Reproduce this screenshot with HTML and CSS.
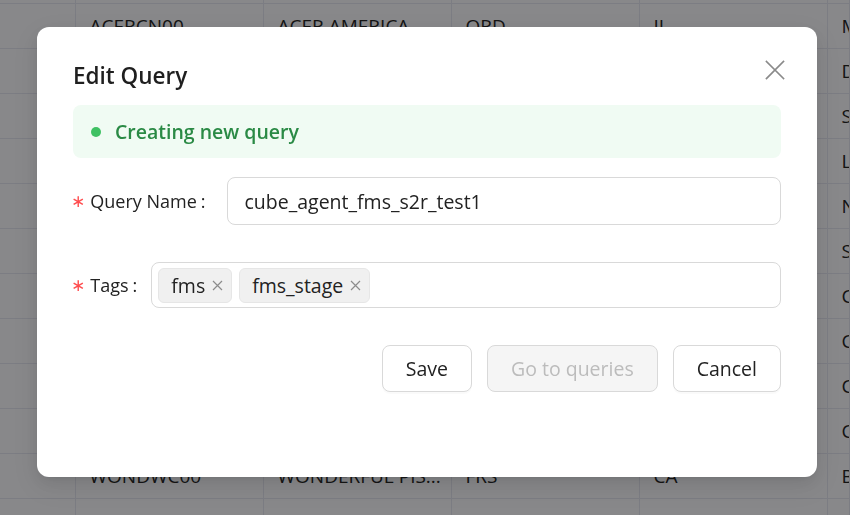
FILE: index.html
```html
<!doctype html>
<html lang="en">
  <head>
    <meta charset="UTF-8" />
    <meta name="viewport" content="width=device-width, initial-scale=1.0" />
    <title>Edit Query</title>
    <link rel="stylesheet" href="styles.css">
  </head>
  <body>
    <div class="page">
      <table class="grid">
        <tbody>
          <tr><td></td><td></td><td></td><td></td><td></td><td></td></tr>
          <tr><td></td><td>ACERCN00</td><td>ACER AMERICA</td><td>ORD</td><td>IL</td><td>MA</td></tr>
          <tr><td></td><td>ACERCN00</td><td>ACER AMERICA</td><td>ORD</td><td>IL</td><td>DE</td></tr>
          <tr><td></td><td>ACERCN00</td><td>ACER AMERICA</td><td>ORD</td><td>IL</td><td>SE</td></tr>
          <tr><td></td><td>ACERCN00</td><td>ACER AMERICA</td><td>ORD</td><td>IL</td><td>LA</td></tr>
          <tr><td></td><td>ACERCN00</td><td>ACER AMERICA</td><td>ORD</td><td>IL</td><td>NE</td></tr>
          <tr><td></td><td>ACERCN00</td><td>ACER AMERICA</td><td>ORD</td><td>IL</td><td>SE</td></tr>
          <tr><td></td><td>WONDWC00</td><td>WONDERFUL PIS...</td><td>FRS</td><td>CA</td><td>CH</td></tr>
          <tr><td></td><td>WONDWC00</td><td>WONDERFUL PIS...</td><td>FRS</td><td>CA</td><td>CH</td></tr>
          <tr><td></td><td>WONDWC00</td><td>WONDERFUL PIS...</td><td>FRS</td><td>CA</td><td>CH</td></tr>
          <tr><td></td><td>WONDWC00</td><td>WONDERFUL PIS...</td><td>FRS</td><td>CA</td><td>CH</td></tr>
          <tr><td></td><td>WONDWC00</td><td>WONDERFUL PIS...</td><td>FRS</td><td>CA</td><td>BO</td></tr>
          <tr><td></td><td>WONDWC00</td><td>WONDERFUL PIS</td><td>FRS</td><td>CA</td><td>CH</td></tr>
        </tbody>
      </table>
    </div>

    <div class="mask">
      <div class="modal" role="dialog" aria-labelledby="modal-title">
        <button class="close" type="button" aria-label="Close">
          <svg width="20" height="20" viewBox="0 0 20 20" fill="none" stroke="#8a8a8a" stroke-width="1.7" stroke-linecap="square">
            <path d="M1.5 1.5l17 17M18.5 1.5l-17 17" />
          </svg>
        </button>

        <h2 id="modal-title" class="title">Edit Query</h2>

        <div class="alert">
          <span class="dot"></span>
          <span>Creating new query</span>
        </div>

        <div class="form-item">
          <label class="label" for="query-name"><span class="req">∗</span>Query Name<span class="colon">:</span></label>
          <input id="query-name" class="input" type="text" value="cube_agent_fms_s2r_test1" />
        </div>

        <div class="form-item tight">
          <label class="label"><span class="req">∗</span>Tags<span class="colon">:</span></label>
          <div class="select">
            <span class="tag">fms<svg class="tag-x" width="11" height="11" viewBox="0 0 11 11" fill="none" stroke="#8c8c8c" stroke-width="1.2"><path d="M1 1l9 9M10 1l-9 9" /></svg></span>
            <span class="tag">fms_stage<svg class="tag-x" width="11" height="11" viewBox="0 0 11 11" fill="none" stroke="#8c8c8c" stroke-width="1.2"><path d="M1 1l9 9M10 1l-9 9" /></svg></span>
          </div>
        </div>

        <div class="footer">
          <button class="btn" type="button">Save</button>
          <button class="btn" type="button" disabled>Go to queries</button>
          <button class="btn" type="button">Cancel</button>
        </div>
      </div>
    </div>
  </body>
</html>
```

FILE: styles.css
```css
:root {
  box-sizing: border-box;
  color: #222;
  font: 19.5px "Open Sans", "Noto Sans", sans-serif;
}

*,
*:before,
*:after {
  box-sizing: inherit;
}

body {
  margin: 0;
  overflow: hidden;
  background: #f7f8fc;
}

/* Background table */
.page {
  height: 100vh;
  overflow: hidden;
}

.grid {
  width: 850px;
  margin-top: -42px;
  border-collapse: collapse;
  table-layout: fixed;
  font-size: 19px;
  color: #262626;
}

.grid td {
  height: 45px;
  padding: 0 0 0 14px;
  border-right: 1px solid #e2e3ee;
  border-bottom: 1px solid #e2e3ee;
  white-space: nowrap;
  overflow: hidden;
}

.grid td:first-child {
  width: 75px;
}

.grid td:nth-child(n+2):nth-child(-n+5) {
  width: 188px;
}

/* Overlay */
.mask {
  position: fixed;
  inset: 0;
  padding: 27px 0 0 37px;
  background: rgba(0, 0, 0, 0.45);
}

.modal {
  position: relative;
  width: 780px;
  height: 450px;
  padding: 33px 36px 0;
  border-radius: 12px;
  background: #fff;
  box-shadow:
    0 6px 16px 0 rgba(0, 0, 0, 0.08),
    0 3px 6px -4px rgba(0, 0, 0, 0.12),
    0 9px 28px 8px rgba(0, 0, 0, 0.05);
}

.close {
  position: absolute;
  top: 33px;
  right: 32px;
  width: 20px;
  height: 20px;
  padding: 0;
  border: 0;
  background: none;
  cursor: pointer;
}

.close svg {
  display: block;
}

.title {
  margin: 0;
  font-size: 22.5px;
  font-weight: 600;
  line-height: 32px;
  color: #1f1f1f;
}

.alert {
  display: flex;
  align-items: center;
  height: 53px;
  margin-top: 13px;
  padding: 0 18px;
  gap: 14px;
  border-radius: 8px;
  background: #f0fbf3;
  color: #2a8a45;
  font-weight: 600;
}

.dot {
  width: 10px;
  height: 10px;
  border-radius: 50%;
  background: #3fc163;
}

.form-item {
  display: flex;
  align-items: center;
  margin-top: 19px;
  gap: 16px;

  & + .form-item {
    margin-top: 37px;
  }

  &.tight {
    gap: 9px;
  }
}

.label {
  display: flex;
  align-items: center;
  white-space: nowrap;
  font-size: 18px;
  color: #222;
}

.req {
  margin-left: -2px;
  margin-right: 5px;
  color: #ff4d4f;
  font-family: "DejaVu Sans", sans-serif;
  font-size: 17px;
}

.colon {
  margin-left: 4px;
  margin-right: 5px;
}

.input {
  flex: 1;
  height: 48px;
  padding: 0 17px;
  border: 1px solid #d9d9d9;
  border-radius: 8px;
  background: #fff;
  color: #222;
  font: inherit;
  outline: none;
}

.select {
  display: flex;
  flex: 1;
  align-items: center;
  height: 46px;
  padding: 0 6px;
  gap: 7px;
  border: 1px solid #d9d9d9;
  border-radius: 8px;
}

.tag {
  display: inline-flex;
  align-items: center;
  height: 35px;
  padding: 0 8px 0 12px;
  gap: 7px;
  border: 1px solid #e6e6e6;
  border-radius: 6px;
  background: #f0f0f0;
  color: #222;
}

.tag-x {
  display: block;
}

.footer {
  display: flex;
  justify-content: flex-end;
  margin-top: 37px;
  gap: 15px;
}

.btn {
  height: 47px;
  padding: 0 23px;
  border: 1px solid #d9d9d9;
  border-radius: 8px;
  background: #fff;
  color: #222;
  font: inherit;
  box-shadow: 0 2px 0 rgba(0, 0, 0, 0.02);
  cursor: pointer;

  &:disabled {
    background: #f5f5f5;
    color: #bcbcbc;
    box-shadow: none;
    cursor: not-allowed;
  }
}
```
